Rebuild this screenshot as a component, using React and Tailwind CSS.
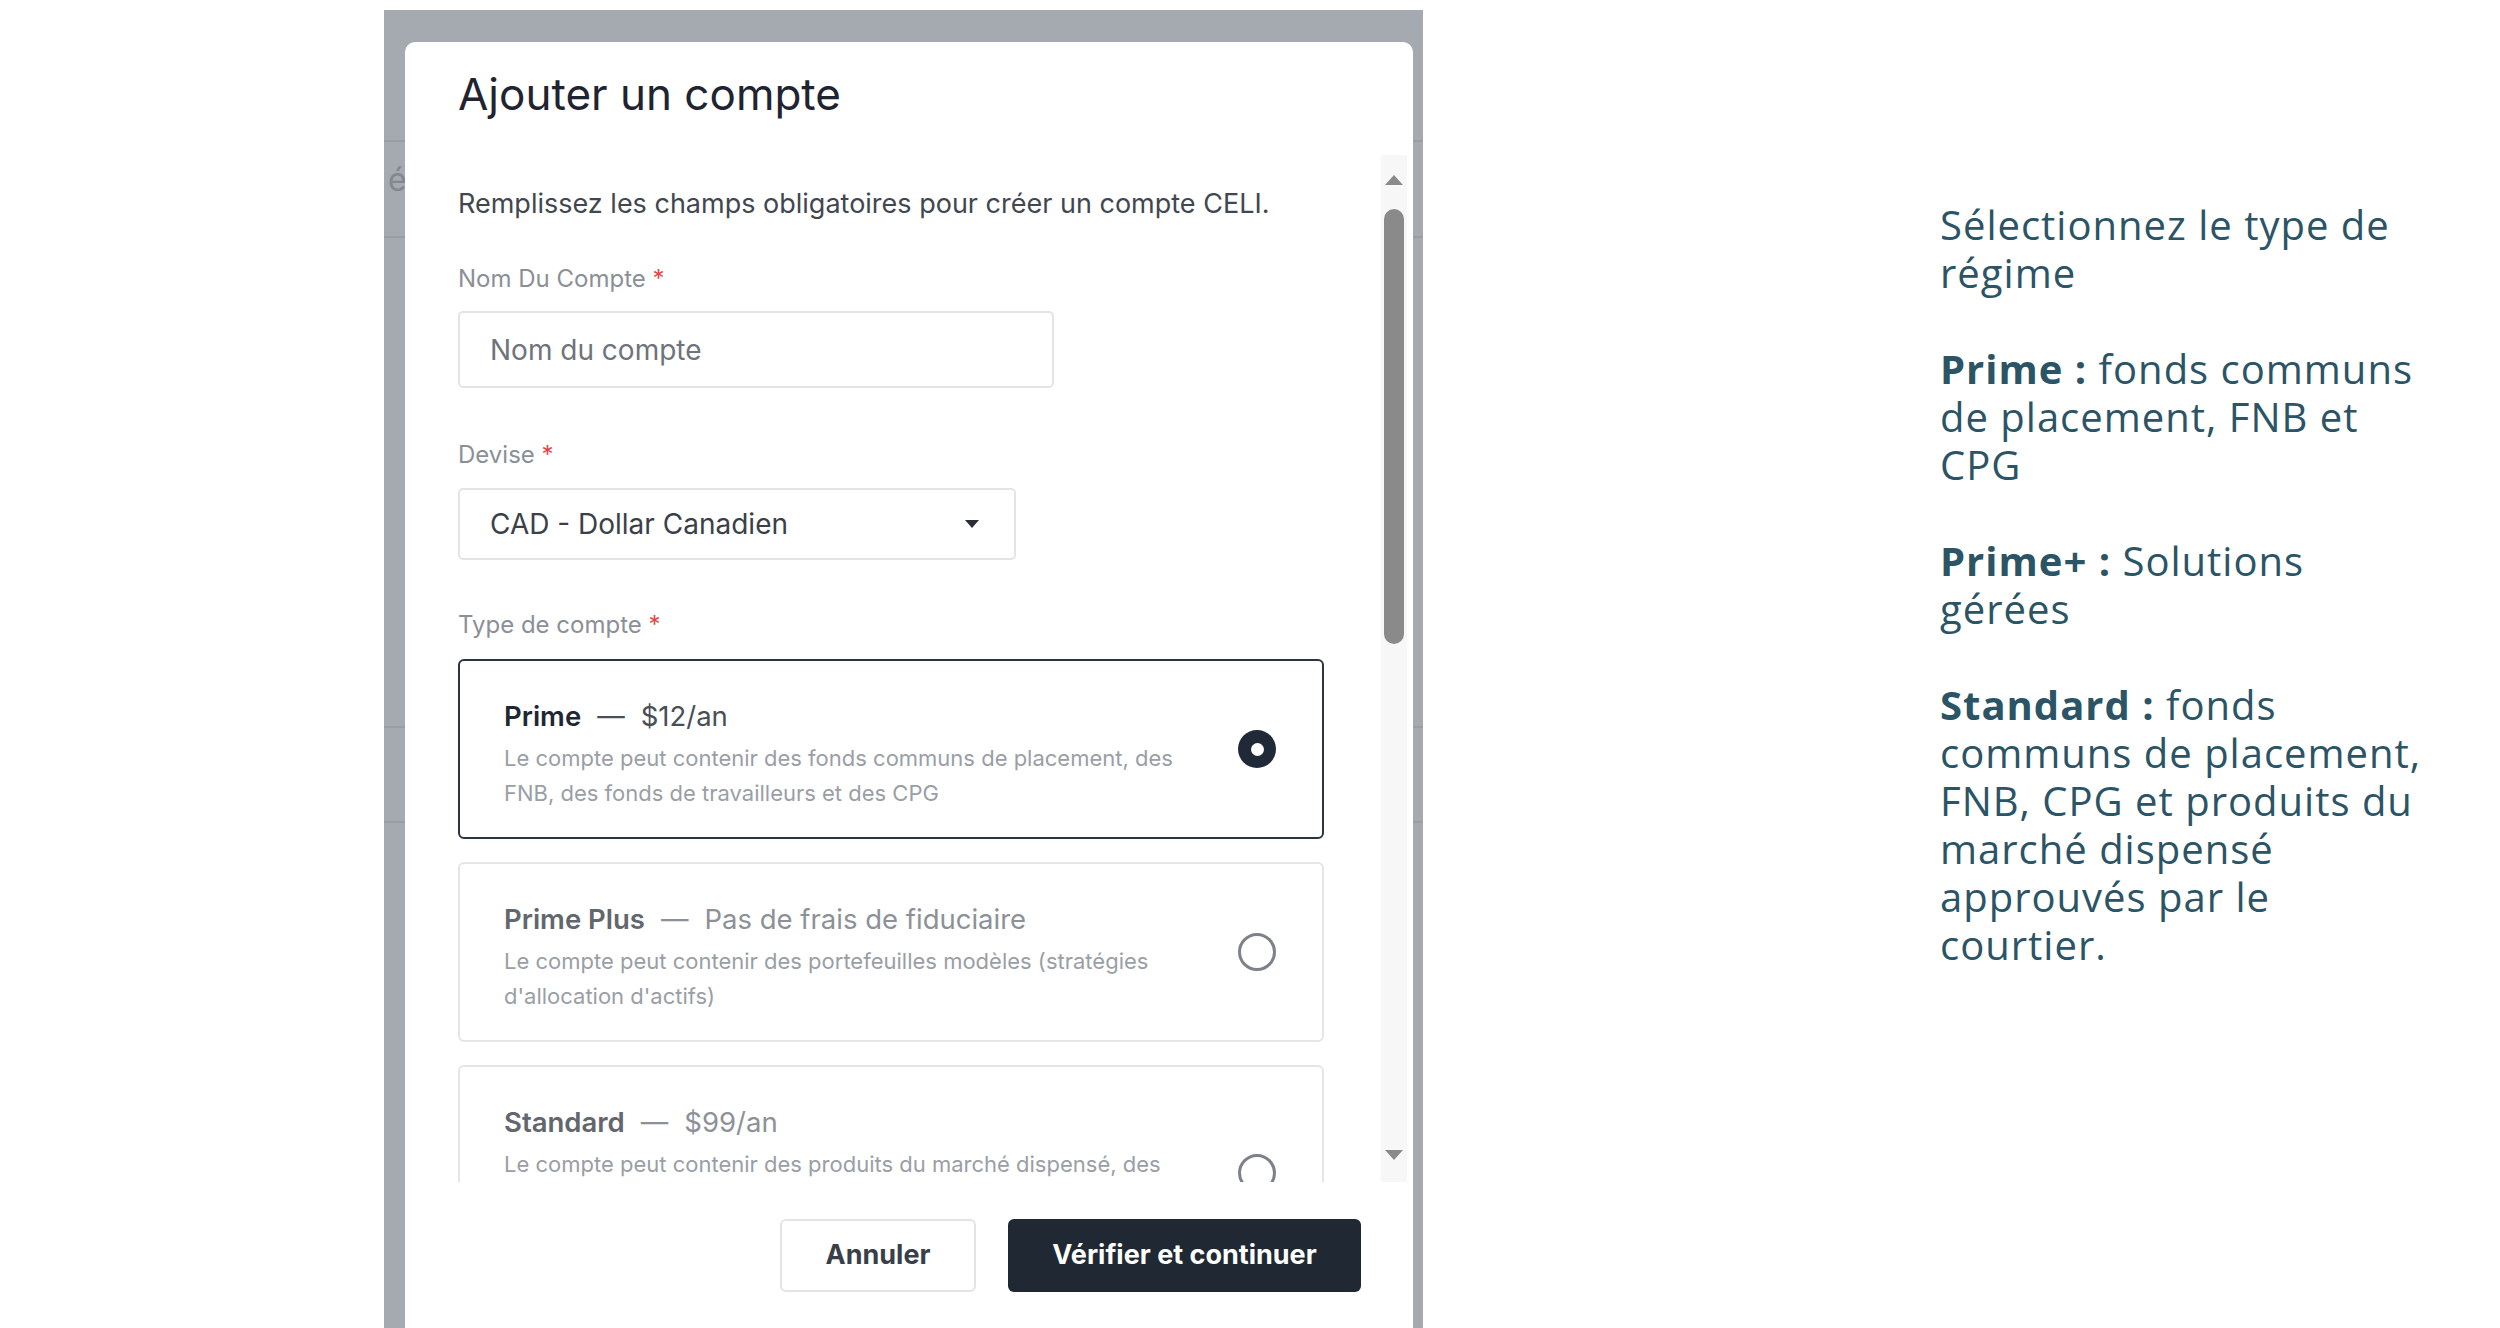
import React from 'react';

const plans = [
  {
    name: 'Prime',
    price: '$12/an',
    selected: true,
    lines: ['Le compte peut contenir des fonds communs de placement, des', 'FNB, des fonds de travailleurs et des CPG'],
  },
  {
    name: 'Prime Plus',
    price: 'Pas de frais de fiduciaire',
    selected: false,
    lines: ['Le compte peut contenir des portefeuilles modèles (stratégies', "d'allocation d'actifs)"],
  },
  {
    name: 'Standard',
    price: '$99/an',
    selected: false,
    lines: [
      'Le compte peut contenir des produits du marché dispensé, des',
      'fonds communs de placement, des FNB et des CPG approuvés',
      'par le courtier',
    ],
  },
];

const Label = ({ children }) => (
  <div className="text-[24px] leading-[32px] text-[#8b8f96]">
    {children} <span className="text-[#e0474c]">*</span>
  </div>
);

const PlanCard = ({ plan }) => (
  <div
    className={`flex items-center justify-between rounded-[6px] border-2 pl-[44px] pr-[46px] pt-[37px] pb-[26px] ${
      plan.selected ? 'border-[#2b3441]' : 'border-[#e3e5e9]'
    }`}
  >
    <div>
      <div className="text-[27.5px] leading-[36px] whitespace-nowrap">
        <span className={`font-semibold ${plan.selected ? 'text-[#1f2732]' : 'text-[#62666d]'}`}>{plan.name}</span>
        <span className={`mx-[16px] ${plan.selected ? 'text-[#4a4f57]' : 'text-[#8d9197]'}`}>—</span>
        <span className={plan.selected ? 'text-[#4a4f57]' : 'text-[#8d9197]'}>{plan.price}</span>
      </div>
      <div className="mt-[7px] text-[22px] leading-[35px] text-[#9a9ea5] whitespace-nowrap">
        {plan.lines.map((l) => (
          <div key={l}>{l}</div>
        ))}
      </div>
    </div>
    {plan.selected ? (
      <div className="mb-[11px] w-[38px] h-[38px] rounded-full bg-[#1f2937] flex items-center justify-center">
        <div className="w-[13px] h-[13px] rounded-full bg-white" />
      </div>
    ) : (
      <div className="mb-[11px] w-[38px] h-[38px] rounded-full border-[3px] border-[#7d828a]" />
    )}
  </div>
);

const ScrollBar = () => (
  <div className="w-[26px] h-full bg-[#f7f7f7] flex flex-col items-center pt-[19px] pb-[21px]">
    <svg width="20" height="12" viewBox="0 0 20 12">
      <path d="M10 1 L19 11 L1 11 Z" fill="#8a8a8a" />
    </svg>
    <div className="mt-[23px] w-[20px] h-[435px] rounded-full bg-[#8a8a8a]" />
    <div className="flex-1" />
    <svg width="20" height="12" viewBox="0 0 20 12">
      <path d="M1 1 L19 1 L10 11 Z" fill="#8a8a8a" />
    </svg>
  </div>
);

export default function App() {
  return (
    <div className="w-[2500px] h-[1328px] bg-white flex overflow-hidden font-['Inter',_'Liberation_Sans',_sans-serif]">
      {/* screenshot of the dialog */}
      <div className="pl-[384px] pt-[10px]">
        <div className="relative w-[1039px] h-[1318px] bg-[#a5a9b0] pt-[32px] pl-[21px] pr-[10px]">
          <div className="absolute left-0 right-0 top-[130px] h-[2px] bg-[#999da4]" />
          <div className="absolute left-0 right-0 top-[226px] h-[2px] bg-[#999da4]" />
          <div className="absolute left-0 right-0 top-[716px] h-[2px] bg-[#999da4]" />
          <div className="absolute left-0 right-0 top-[811px] h-[2px] bg-[#999da4]" />
          <div className="absolute left-[4px] top-[150px] text-[32px] leading-[40px] text-[#83878e]">é</div>

          <div className="relative h-full bg-white rounded-t-[10px] flex flex-col">
            <div className="h-[113px] pl-[53px] pt-[24px] text-[44px] leading-[56px] text-[#1f2430]">
              Ajouter un compte
            </div>

            <div className="h-[1027px] flex">
              <div className="flex-1 overflow-hidden pl-[53px]">
                <div className="w-[866px]">
                  <div className="pt-[31px] text-[27px] leading-[36px] text-[#42474f] whitespace-nowrap">
                    Remplissez les champs obligatoires pour créer un compte CELI.
                  </div>

                  <div className="mt-[41px]">
                    <Label>Nom Du Compte</Label>
                  </div>
                  <div className="mt-[16px] w-[596px] h-[77px] rounded-[5px] border-2 border-[#e2e4e8] flex items-center pl-[30px] text-[28px] text-[#6f737a]">
                    Nom du compte
                  </div>

                  <div className="mt-[51px]">
                    <Label>Devise</Label>
                  </div>
                  <div className="mt-[17px] w-[558px] h-[72px] rounded-[5px] border-2 border-[#e2e4e8] flex items-center justify-between pl-[30px] pr-[34px] text-[28px] text-[#3b4048]">
                    <span>CAD - Dollar Canadien</span>
                    <svg width="16" height="10" viewBox="0 0 16 10">
                      <path d="M1 1 L15 1 L8 9 Z" fill="#2a2d33" />
                    </svg>
                  </div>

                  <div className="mt-[49px]">
                    <Label>Type de compte</Label>
                  </div>
                  <div className="mt-[18px] flex flex-col gap-[23px]">
                    {plans.map((p) => (
                      <PlanCard key={p.name} plan={p} />
                    ))}
                  </div>
                </div>
              </div>
              <div className="pr-[6px]">
                <ScrollBar />
              </div>
            </div>

            <div className="flex justify-end gap-[32px] pr-[52px] pt-[37px]">
              <button className="w-[196px] h-[73px] rounded-[6px] border-2 border-[#e2e4e8] bg-white text-[27px] font-bold text-[#3a3f47]">
                Annuler
              </button>
              <button className="w-[353px] h-[73px] rounded-[6px] bg-[#1f2833] text-[27px] font-bold text-white">
                Vérifier et continuer
              </button>
            </div>
          </div>
        </div>
      </div>

      {/* side notes */}
      <div className="ml-[517px] pt-[201px] font-['Open_Sans',_sans-serif] text-[40px] leading-[48px] text-[#2b5466] tracking-[0.025em] whitespace-nowrap">
        <p>
          Sélectionnez le type de
          <br />
          régime
        </p>
        <p className="mt-[48px]">
          <span className="font-bold">Prime :</span> fonds communs
          <br />
          de placement, FNB et
          <br />
          CPG
        </p>
        <p className="mt-[48px]">
          <span className="font-bold">Prime+ :</span> Solutions
          <br />
          gérées
        </p>
        <p className="mt-[48px]">
          <span className="font-bold">Standard :</span> fonds
          <br />
          communs de placement,
          <br />
          FNB, CPG et produits du
          <br />
          marché dispensé
          <br />
          approuvés par le
          <br />
          courtier.
        </p>
      </div>
    </div>
  );
}
